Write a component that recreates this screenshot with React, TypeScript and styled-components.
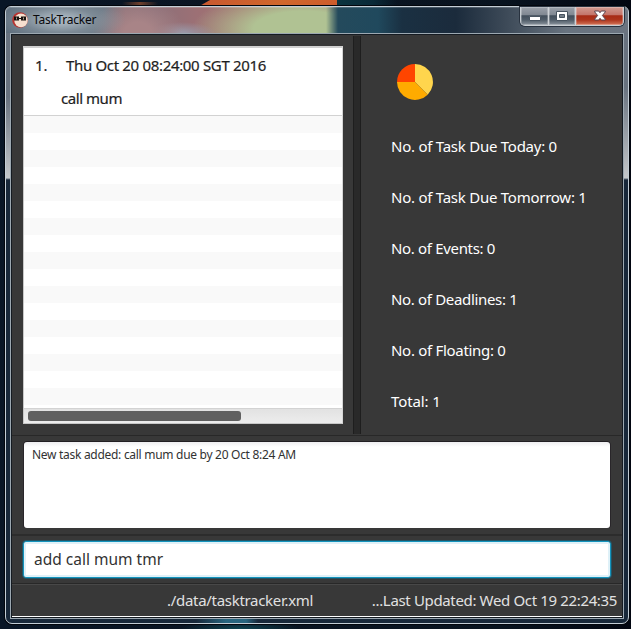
import React from "react";
import styled, { createGlobalStyle } from "styled-components";

const Global = createGlobalStyle`
  *, *::before, *::after { box-sizing: border-box; }
  body { margin: 0; overflow: hidden; }
`;

const Desktop = styled.div`
  width: 631px;
  height: 629px;
  padding: 6px 2px 5px 5px;
  font-family: "Noto Sans", "Open Sans", sans-serif;
  background:
    radial-gradient(ellipse 60px 8px at 240px 629px, #0e4452, transparent),
    linear-gradient(90deg, #0a3440, #0a2a38 60%, transparent) 337px 0 / 60px 6px no-repeat,
    linear-gradient(150deg, transparent 8px, #c9592f 9px, #d0672c 60%, #cd5b2c) 193px 0 / 144px 6px no-repeat,
    linear-gradient(90deg, transparent, #70402c 50%, transparent) 122px 2px / 36px 4px no-repeat,
    linear-gradient(90deg, #091626, #0a1422 40%, #08131f 80%, #020611);
`;

const Frame = styled.div`
  width: 624px;
  height: 618px;
  display: flex;
  flex-direction: column;
  padding: 0 4px 4px;
  border: 1px solid #c3cdd5;
  border-radius: 6px 6px 7px 7px;
  box-shadow: 0 0 0 1px #02060d;
  background:
    linear-gradient(180deg, #68727f 0, #68727f 90px, #c4c7ca 171px, #5c6876 172px, transparent 173px) 0 0 / 5px 600px no-repeat,
    linear-gradient(180deg, #68727f 0, #68727f 80px, #c4c7ca 171px, #5c6876 172px, transparent 173px) 617px 0 / 5px 600px no-repeat,
    linear-gradient(90deg, transparent 190px, #28657f 220px, #28657f 240px, transparent 252px) 0 611px / 622px 5px no-repeat,
    #18283a;
`;

const TitleBar = styled.header`
  height: 26px;
  margin: 0 -4px;
  flex: none;
  display: flex;
  border-radius: 5px 5px 0 0;
  box-shadow: inset 0 1px #ffffff30;
  background:
    radial-gradient(ellipse 66px 22px at 54px 13px, #a8b5bf 15%, #8b98a2a0 55%, transparent),
    radial-gradient(ellipse 46px 36px at 132px 26px, #a88487 30%, transparent),
    radial-gradient(ellipse 34px 11px at 176px 26px, #9a97a6 10%, transparent),
    linear-gradient(90deg, transparent 320px, #244a5c 332px, #20495d 372px, #1a3042 396px, #1b2b3c 450px, #3d4a58 500px, #68737f 560px, #6b7480),
    radial-gradient(ellipse 112px 40px at 298px 22px, #b0c293 45%, transparent),
    linear-gradient(90deg, #5d6d7c 0, #667481 90px, #6b7683 98px, #8d7279 120px, #8c7079 150px, #9c7075 190px, #a4706f 235px, #a4706f);
`;

const AppName = styled.div`
  display: flex;
  align-items: center;
  gap: 5px;
  padding: 0 0 0 6px;
  height: 26px;
  color: #08080b;
  font-size: 12px;
  letter-spacing: -0.26px;

  span {
    margin-top: -2px;
  }
`;

const WindowButtons = styled.div`
  display: flex;
  height: 19px;
  width: 104px;
  margin: 0 4px 0 auto;
  border: 1px solid #c9cfd4;
  border-top: 0;
  border-radius: 0 0 5px 5px;
  overflow: hidden;
  box-shadow: 0 0 0 1px #28323f;
`;

const WindowButton = styled.button<{ $w: number; $close?: boolean }>`
  width: ${(p) => p.$w}px;
  flex: none;
  padding: 0;
  border: 0;
  border-right: ${(p) => (p.$close ? "0" : "1px solid #cdd2d7")};
  display: grid;
  place-items: center;
  box-shadow: inset 0 0 0 1px #ffffff40;
  background: ${(p) =>
    p.$close
      ? "linear-gradient(#d29b91 0, #c37369 45%, #a72b16 48%, #ad351d 72%, #d3765a)"
      : "linear-gradient(#9ba1aa 0, #7f8791 45%, #424e5b 48%, #505d69 72%, #8b949d)"};

  svg {
    margin-top: -1px;
  }
`;

const MinimizeGlyph = styled.svg`
  && {
    margin-top: 4px;
  }
`;

const Client = styled.main`
  flex: 1;
  display: flex;
  flex-direction: column;
  border: 1px solid #9ca8b1;
  background: #383838;
  box-shadow: inset 0 0 0 1px #151b22;
  padding: 1px 1px 1px;
`;

const Split = styled.section`
  display: flex;
  height: 401px;
  flex: none;
  padding-top: 1px;
  border-bottom: 1px solid #282828;
`;

const ListSide = styled.div`
  width: 341px;
  padding: 10px 0 0 11px;
`;

const TaskList = styled.div`
  width: 320px;
  height: 378px;
  display: flex;
  flex-direction: column;
  border: 1px solid #c8c8c8;
  border-top: 2px solid #d0d0d0;
  border-right-color: #d6d6d6;
  background: repeating-linear-gradient(#f9f9f9 0 17px, #fff 17px 34px) 0 68px / 100% 293px no-repeat #fff;
`;

const Task = styled.div`
  height: 68px;
  background: #fff;
  border-bottom: 1px solid #d2d2d2;
  color: #1e1e1e;
  font-size: 15px;
  line-height: 20px;
  padding: 7px 0 0 11px;
  -webkit-text-stroke: 0.2px #1e1e1e;
`;

const TaskLine = styled.div<{ $indent?: boolean }>`
  display: flex;
  height: 33px;
  padding-left: ${(p) => (p.$indent ? 26 : 0)}px;
  white-space: nowrap;
`;

const TaskNumber = styled.span`
  width: 31px;
`;

const Fit = styled.span<{ $s: number }>`
  letter-spacing: ${(p) => p.$s}px;
  white-space: pre;
`;

const ScrollTrack = styled.div`
  height: 15px;
  margin-top: auto;
  padding: 2px 4px;
  border-top: 1px solid #d3d3d3;
  background: linear-gradient(#e2e2e2, #ededed);
`;

const ScrollThumb = styled.div`
  width: 213px;
  height: 10px;
  border-radius: 3px;
  background: #606060;
`;

const Divider = styled.div`
  width: 8px;
  height: 398px;
  background: #292929;
  border: solid #1e1e1e;
  border-width: 0 1px;
`;

const Stats = styled.aside`
  flex: 1;
  padding: 27px 0 0 30px;
  color: #fff;
  font-size: 15px;
`;

const Pie = styled.svg`
  display: block;
  margin: 0 0 35px 5px;
`;

const Stat = styled.div`
  height: 51px;
  line-height: 20px;
`;

const ResultArea = styled.section`
  height: 100px;
  flex: none;
  padding: 6px 12px 0 12px;
  border-bottom: 2px solid #2c2c2c;
`;

const Result = styled.div`
  height: 86px;
  padding: 4px 8px;
  border-radius: 3px;
  background: linear-gradient(#eeeef0, #fff 5px);
  box-shadow: 0 -1px #211e22, 1px 0 #29262a, -1px 0 #29262a;
  color: #323232;
  font-size: 12px;
  line-height: 17px;
`;

const CommandArea = styled.section`
  height: 48px;
  flex: none;
  padding: 5px 10px 0 11px;
  border-bottom: 1px solid #282828;
`;

const Command = styled.input`
  display: block;
  width: 588px;
  height: 37px;
  padding: 0 9px 2px 10px;
  border: 1px solid #1494bd;
  outline: 1px solid #176580aa;
  outline-offset: 0;
  border-radius: 3px;
  box-shadow: inset 0 0 0 2px #dff1f8;
  background: #fff;
  color: #323232;
  font: 15.5px "Noto Sans", "Open Sans", sans-serif;
  letter-spacing: 0;
`;

const Status = styled.footer`
  flex: 1;
  display: flex;
  justify-content: space-between;
  padding: 5px 5px 0 155px;
  border-top: 1px solid #484848;
  border-bottom: 1px solid #fff;
  color: #e1e1e1;
  font-size: 15px;
  line-height: 20px;
`;

const stats: [string, number][] = [
  ["No. of Task Due Today: 0", -0.25],
  ["No. of Task Due Tomorrow: 1", -0.25],
  ["No. of Events: 0", -0.33],
  ["No. of Deadlines: 1", -0.33],
  ["No. of Floating: 0", -0.3],
  ["Total: 1", -0.1],
];

function Logo() {
  return (
    <svg width="16" height="16" viewBox="0 0 16 16">
      <circle cx="8" cy="8" r="7.8" fill="#b8322f" />
      <ellipse cx="9" cy="8.4" rx="6.7" ry="6.8" fill="#f6dfcf" />
      <path d="M2 4.5h5v4H2zM9 4.5h5v4H9z" fill="#17120f" />
      <path d="M7 6.5h2" stroke="#17120f" />
      <path d="M4.5 5.5v2M11.5 5.5v2" stroke="#b59c90" />
    </svg>
  );
}

export default function App() {
  return (
    <Desktop>
      <Global />
      <Frame>
        <TitleBar>
          <AppName>
            <Logo />
            <span>TaskTracker</span>
          </AppName>
          <WindowButtons>
            <WindowButton $w={28} aria-label="Minimize">
              <MinimizeGlyph width="12" height="5" viewBox="0 0 12 5">
                <path d="M.5.5h11v4H.5z" fill="#fff" stroke="#485460" />
              </MinimizeGlyph>
            </WindowButton>
            <WindowButton $w={27} aria-label="Maximize">
              <svg width="12" height="10" viewBox="0 0 12 10">
                <path d="M.5.5h11v9H.5z" fill="#fff" stroke="#485460" />
                <path d="M3.5 3.5h5v3h-5z" fill="#747e88" stroke="#485460" />
              </svg>
            </WindowButton>
            <WindowButton $w={47} $close aria-label="Close">
              <svg width="12" height="11" viewBox="0 0 12 11">
                <path
                  d="M.7 1h4L6 2.7 7.3 1h4v.9L8.4 5.5l2.9 3.6v.9h-4L6 8.3 4.7 10h-4v-.9l2.9-3.6L.7 1.9z"
                  fill="#fff"
                  stroke="#58404b"
                />
              </svg>
            </WindowButton>
          </WindowButtons>
        </TitleBar>
        <Client>
          <Split>
            <ListSide>
              <TaskList>
                <Task>
                  <TaskLine>
                    <TaskNumber>1.</TaskNumber>
                    <Fit $s={-0.33}>Thu Oct 20 08:24:00 SGT 2016</Fit>
                  </TaskLine>
                  <TaskLine $indent>
                    <Fit $s={-0.45}>call mum</Fit>
                  </TaskLine>
                </Task>
                <ScrollTrack>
                  <ScrollThumb />
                </ScrollTrack>
              </TaskList>
            </ListSide>
            <Divider />
            <Stats>
              <Pie width="38" height="38" viewBox="0 0 38 38">
                <path d="M19 19V1a18 18 0 0 1 12.7 30.7z" fill="#ffd54d" />
                <path d="M19 19l12.7 12.7A18 18 0 0 1 1 19z" fill="#ffab00" />
                <path d="M19 19H1A18 18 0 0 1 19 1z" fill="#ff4500" />
              </Pie>
              {stats.map(([text, s]) => (
                <Stat key={text}>
                  <Fit $s={s}>{text}</Fit>
                </Stat>
              ))}
            </Stats>
          </Split>
          <ResultArea>
            <Result>
              <Fit $s={-0.29}>New task added: call mum due by 20 Oct 8:24 AM</Fit>
            </Result>
          </ResultArea>
          <CommandArea>
            <Command defaultValue="add call mum tmr" aria-label="Command" />
          </CommandArea>
          <Status>
            <Fit $s={-0.3}>./data/tasktracker.xml</Fit>
            <Fit $s={-0.35}>...Last Updated: Wed Oct 19 22:24:35</Fit>
          </Status>
        </Client>
      </Frame>
    </Desktop>
  );
}
